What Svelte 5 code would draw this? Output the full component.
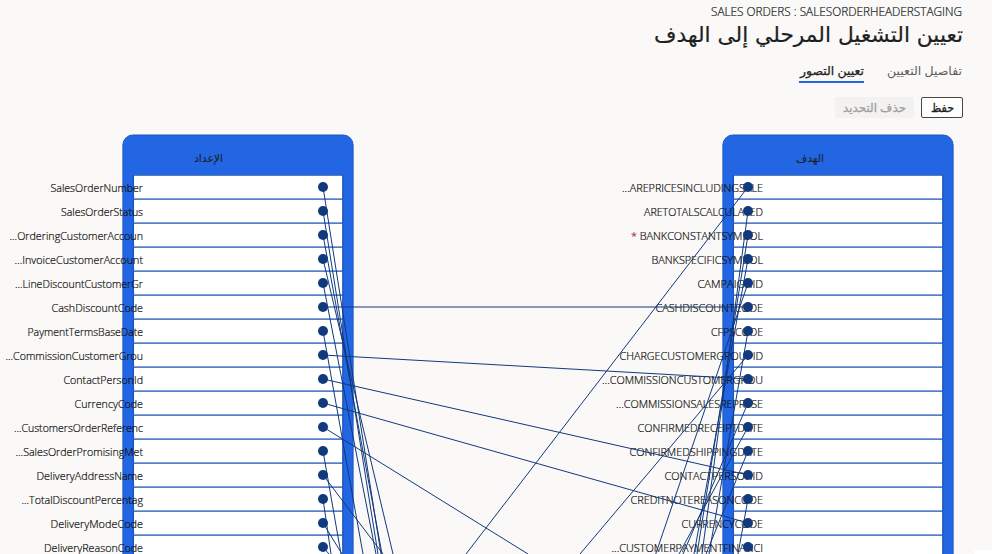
<script>
  // text, left edge
  const source = [
    ['SalesOrderNumber', 50.5], ['SalesOrderStatus', 61], ['OrderingCustomerAccoun...', 9.5],
    ['InvoiceCustomerAccount...', 14.5], ['LineDiscountCustomerGr...', 15], ['CashDiscountCode', 51.5],
    ['PaymentTermsBaseDate', 27.5], ['CommissionCustomerGrou...', 5.5], ['ContactPersonId', 63.5],
    ['CurrencyCode', 74.5], ['CustomersOrderReferenc...', 14], ['SalesOrderPromisingMet...', 15.5],
    ['DeliveryAddressName', 36.5], ['TotalDiscountPercentag...', 21.5], ['DeliveryModeCode', 50.5],
    ['DeliveryReasonCode', 44]
  ];
  const target = [
    ['AREPRICESINCLUDINGSALE...', 622], ['ARETOTALSCALCULATED', 644], ['BANKCONSTANTSYMBOL *', 631],
    ['BANKSPECIFICSYMBOL', 651.5], ['CAMPAIGNID', 697.5], ['CASHDISCOUNTCODE', 655.5],
    ['CFPSCODE', 711], ['CHARGECUSTOMERGROUPID', 619.5], ['COMMISSIONCUSTOMERGROU...', 602],
    ['COMMISSIONSALESREPRESE...', 616], ['CONFIRMEDRECEIPTDATE', 637.5], ['CONFIRMEDSHIPPINGDATE', 629.5],
    ['CONTACTPERSONID', 664.5], ['CREDITNOTEREASONCODE', 630.5], ['CURRENCYCODE', 681.5],
    ['CUSTOMERPAYMENTFINANCI...', 611.5]
  ];
  const groups = [
    { x: 123, title: 'الإعداد', tx: 194, tw: 29, end: 143, dot: 323, rows: source },
    { x: 723, title: 'الهدف', tx: 796, tw: 28, end: 763, dot: 748, rows: target }
  ];
  const y = (i) => 187 + 24 * i;
  // Links leaving the visible area end at its lower edge.
  const out = [[0, 381], [1, 378], [2, 382], [3, 393], [4, 376], [6, 363], [11, 341], [12, 383], [13, 331], [14, 342], [15, 329]];
  const incoming = [[0, 466], [1, 702], [2, 697], [3, 694], [4, 655.7], [6, 709], [7, 580], [9, 683], [10, 679], [11, 706], [13, 738]];
  const across = [[5, 5], [7, 8], [8, 12], [9, 14]];
</script>

<main dir="rtl">
  <header>
    <div class="crumb"><svg width="251" height="15" direction="ltr"><text x="0" y="12" textLength="251" lengthAdjust="spacingAndGlyphs">SALES ORDERS : SALESORDERHEADERSTAGING</text></svg></div>
    <h1><svg width="309" height="34" direction="rtl"><text x="309" y="22.5" textLength="309" lengthAdjust="spacingAndGlyphs">تعيين التشغيل المرحلي إلى الهدف</text></svg></h1>
    <nav>
      <span class="tab"><svg width="75" height="16"><text x="75" y="10" textLength="75" lengthAdjust="spacingAndGlyphs">تفاصيل التعيين</text></svg></span>
      <span class="tab active"><svg width="65" height="16"><text x="65" y="10" textLength="64" lengthAdjust="spacingAndGlyphs">تعيين التصور</text></svg></span>
    </nav>
    <div class="buttons">
      <button class="save"><svg width="23" height="18"><text x="23" y="13" textLength="23" lengthAdjust="spacingAndGlyphs">حفظ</text></svg></button>
      <button class="remove" disabled><svg width="63" height="18"><text x="63" y="13" textLength="63" lengthAdjust="spacingAndGlyphs">حذف التحديد</text></svg></button>
    </div>
  </header>
  <svg class="map" width="992" height="430" viewBox="0 124 992 430" direction="ltr">
    {#each groups as g}
      <rect class="box" x={g.x - 0.1} y="135" width="230.2" height="450" rx="10" />
      {#each g.rows as _, i}
        <rect class="row" x={g.x + 10.4} y={174.9 + 24 * i} width="209.4" height="24" />
      {/each}
      <path class="rules" d={g.rows.map((_, i) => `M${g.x + 10.4} ${175.05 + 24 * i}h209.4`).join('') + `M${g.x + 10.4} 174.9v400M${g.x + 219.8} 174.9v400`} />
      <text class="title" x={g.tx + g.tw} y="162" direction="rtl" textLength={g.tw} lengthAdjust="spacingAndGlyphs">{g.title}</text>
      {#each g.rows as [label, left], i}
        <text class="label" x={g.end} y={y(i) + 5} direction="rtl" textLength={g.end - left} lengthAdjust="spacingAndGlyphs">{#if label.endsWith(' *')}{label.slice(0, -2)}<tspan class="required">{' *'}</tspan>{:else}{label}{/if}</text>
      {/each}
      {#each g.rows as _, i}
        <circle cx={g.dot} cy={y(i)} r="5" />
      {/each}
    {/each}
    <g class="links">
      {#each out as [i, x]}<line x1="323" y1={y(i)} x2={x} y2="554" />{/each}
      {#each incoming as [i, x]}<line x1="748" y1={y(i)} x2={x} y2="554" />{/each}
      {#each across as [a, b]}<line x1="323" y1={y(a)} x2="748" y2={y(b)} />{/each}
      <line x1="323" y1="427" x2="528" y2="554" />
    </g>
    <rect x="974" y="550" width="18" height="4" fill="#fff" />
  </svg>
</main>

<style>
  :global(body) { background: #faf9f8; overflow: hidden; }
  main { width: 992px; height: 554px; overflow: hidden; background: #faf9f8; color: #201f1e; font-family: "Open Sans", "Noto Sans", "DejaVu Sans", sans-serif; }
  header { height: 124px; padding: 4px 29px 0 0; box-sizing: border-box; }
  svg { display: block; overflow: visible; fill: currentColor; }
  .crumb { height: 15px; font-size: 12px; font-weight: 300; padding-right: 1px; }
  .crumb text { stroke: #201f1e; stroke-width: .22; }
  h1 { margin: 0; height: 46px; font-size: 21.5px; font-weight: 400; font-family: "DejaVu Sans", sans-serif; }
  h1 text { stroke: #201f1e; stroke-width: .2; }
  nav { display: flex; gap: 23px; height: 32px; font-size: 12px; padding-right: 1px; }
  .tab { color: #605e5c; height: 16px; }
  .active { color: #201f1e; border-bottom: 2px solid #2266e3; }
  .active text { stroke: #201f1e; stroke-width: .25; }
  .buttons { display: flex; gap: 7px; }
  button { box-sizing: border-box; height: 21px; font: 12px "Open Sans", "DejaVu Sans", sans-serif; border-radius: 2px; padding: 0 8px; border: 1px solid #484644; background: #fff; color: #201f1e; }
  button text { stroke: currentColor; stroke-width: .3; }
  .save { width: 42px; }
  .remove { width: 79px; border-color: #f3f2f1; background: #f3f2f1; color: #a19f9d; padding: 0 7px; }
  .box { fill: #2266e3; stroke: #1d56bf; stroke-width: 1; }
  .row { fill: #fff; }
  .rules { fill: none; stroke: #1f55b5; stroke-width: 1.3; }
  .title { font-size: 11px; stroke: #201f1e; stroke-width: .1; }
  .label { font-size: 11.5px; font-weight: 300; fill: #11100f; stroke: #11100f; stroke-width: .22; }
  .required { fill: #a4262c; stroke: #a4262c; }
  circle { fill: #11397e; }
  .links line { stroke: #11397e; stroke-width: 1; }
</style>
